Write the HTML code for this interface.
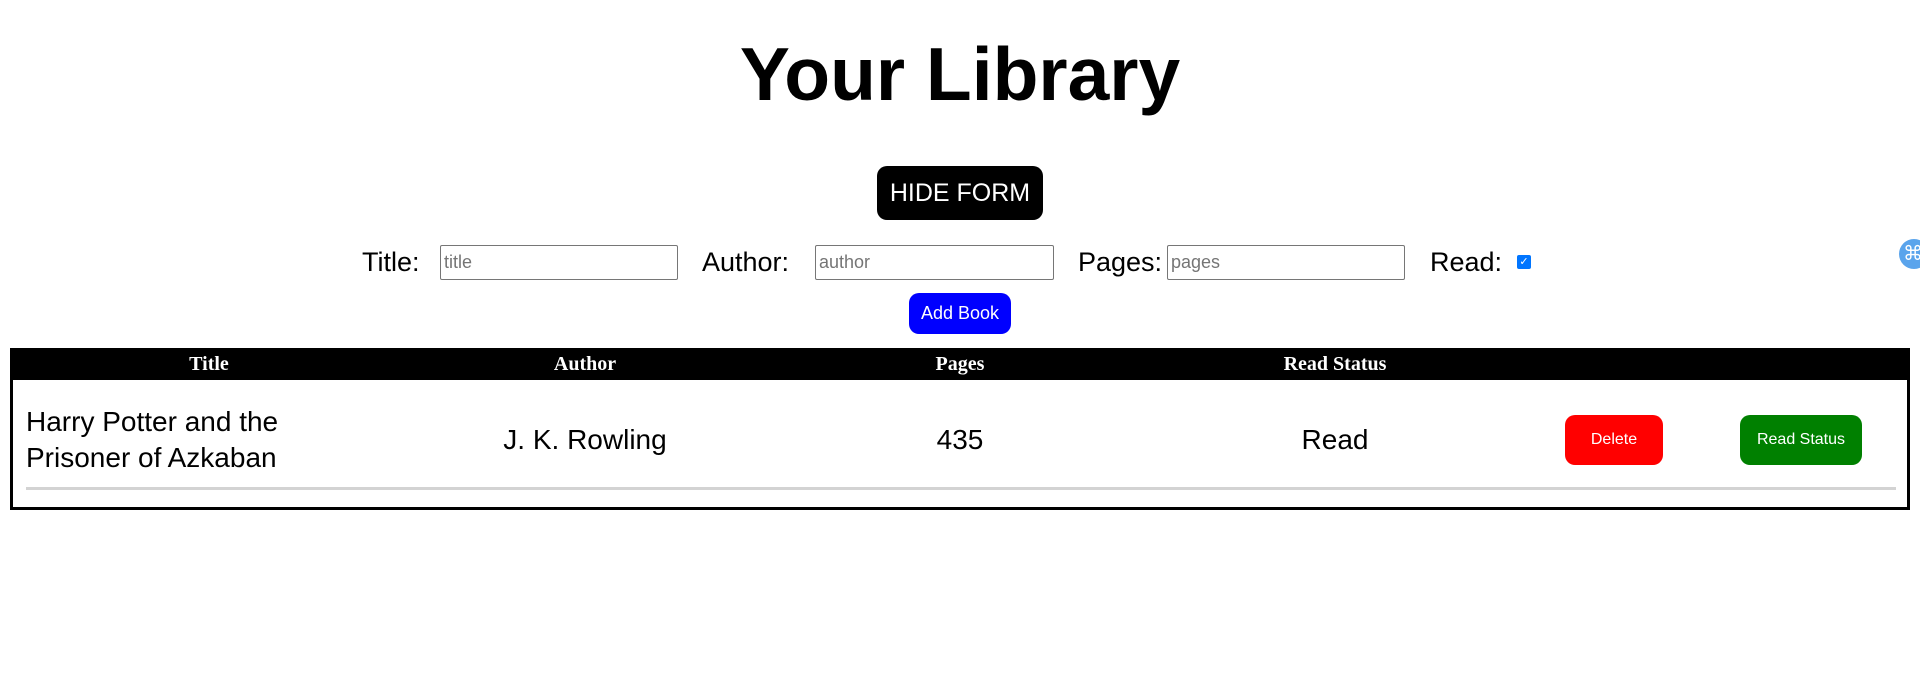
<!DOCTYPE html>
<html><head><style>
body{margin:0;width:1920px;height:686px;background:#fff;position:relative;overflow:hidden;font-family:"Liberation Sans",sans-serif;}
.a{position:absolute;}
h1{position:absolute;left:0;width:1920px;top:24px;margin:0;text-align:center;font-size:75px;font-weight:bold;line-height:100px;}
.btn{position:absolute;color:#fff;text-align:center;border-radius:10px;}
.lbl{position:absolute;font-size:27px;top:244px;line-height:36px;}
.inp{position:absolute;top:245px;height:33px;border:1px solid #767676;border-radius:2px;font-size:18px;color:#757575;line-height:33px;padding-left:3px;box-sizing:content-box;}
.th{position:absolute;top:349px;color:#fff;font-family:"Liberation Serif",serif;font-weight:bold;font-size:20px;line-height:30px;transform:translateX(-50%);}
.td{position:absolute;font-size:28px;transform:translateX(-50%);top:422px;line-height:36px;}
</style></head><body>
<h1>Your Library</h1>
<div class="btn" style="left:877px;top:166px;width:166px;height:54px;background:#000;font-size:25px;line-height:54px;">HIDE FORM</div>
<div class="lbl" style="left:362px">Title:</div>
<div class="inp" style="left:440px;width:233px">title</div>
<div class="lbl" style="left:702px">Author:</div>
<div class="inp" style="left:815px;width:234px">author</div>
<div class="lbl" style="left:1078px">Pages:</div>
<div class="inp" style="left:1167px;width:233px">pages</div>
<div class="lbl" style="left:1430px">Read:</div>
<div class="a" style="left:1517px;top:255px;width:14px;height:14px;background:#0075ff;border-radius:2px;color:#fff;font-size:11px;line-height:14px;text-align:center;">✓</div>
<div class="btn" style="left:909px;top:293px;width:102px;height:41px;background:#00f;font-size:18px;line-height:41px;">Add Book</div>
<div class="a" style="left:1899px;top:239px;width:30px;height:30px;border-radius:50%;background:#5aa4ec;color:#fff;font-size:20px;line-height:30px;text-indent:4px;">⌘</div>
<div class="a" style="left:10px;top:348px;width:1894px;height:156px;border:3px solid #000;"></div>
<div class="a" style="left:10px;top:348px;width:1900px;height:32px;background:#000;"></div>
<div class="th" style="left:209px">Title</div>
<div class="th" style="left:585px">Author</div>
<div class="th" style="left:960px">Pages</div>
<div class="th" style="left:1335px">Read Status</div>
<div class="a" style="left:26px;top:404px;font-size:28px;line-height:36px;">Harry Potter and the<br>Prisoner of Azkaban</div>
<div class="td" style="left:585px;">J. K. Rowling</div>
<div class="td" style="left:960px;">435</div>
<div class="td" style="left:1335px;">Read</div>
<div class="btn" style="left:1565px;top:415px;width:98px;height:50px;background:#f00;font-size:16px;line-height:50px;">Delete</div>
<div class="btn" style="left:1740px;top:415px;width:122px;height:50px;background:#008000;font-size:16px;line-height:50px;">Read Status</div>
<div class="a" style="left:26px;top:487px;width:1870px;height:3px;background:#d3d3d3;"></div>
</body></html>
